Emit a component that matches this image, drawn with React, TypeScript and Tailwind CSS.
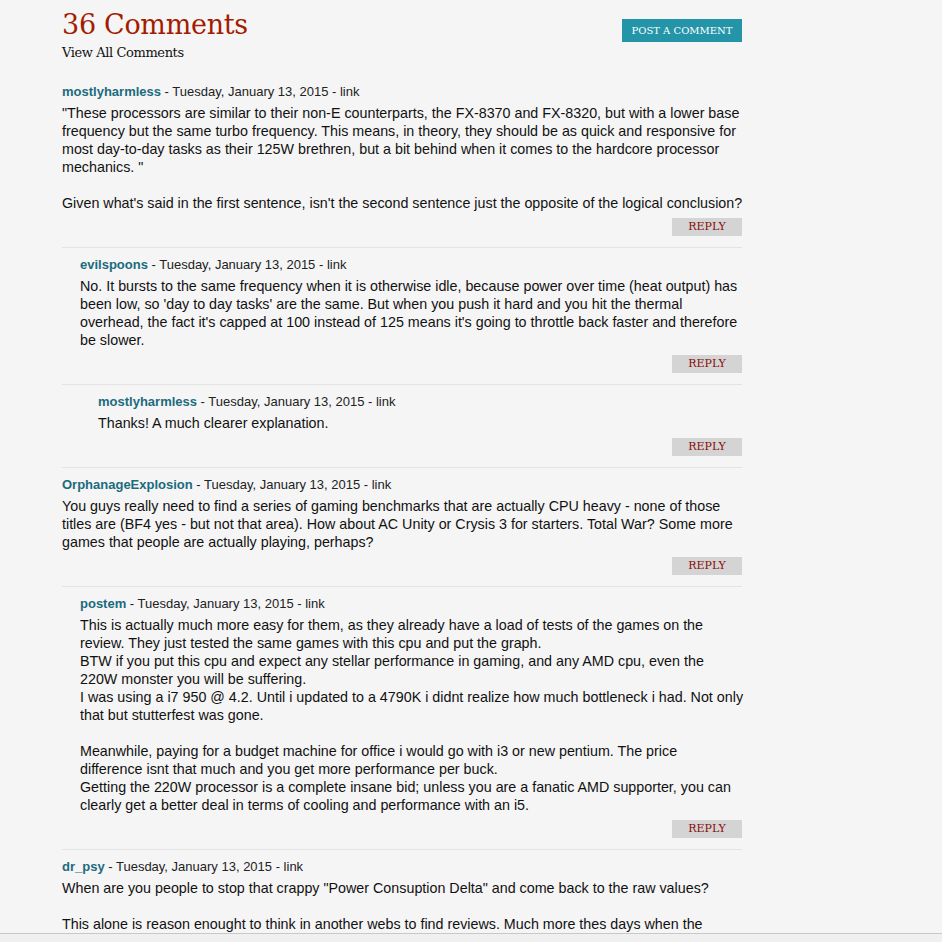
import React from "react";

type C = { user: string; depth: number; paras: string[] };

const comments: C[] = [
  {
    user: "mostlyharmless",
    depth: 0,
    paras: [
      "\"These processors are similar to their non-E counterparts, the FX-8370 and FX-8320, but with a lower base frequency but the same turbo frequency. This means, in theory, they should be as quick and responsive for most day-to-day tasks as their 125W brethren, but a bit behind when it comes to the hardcore processor mechanics. \"",
      "",
      "Given what's said in the first sentence, isn't the second sentence just the opposite of the logical conclusion?",
    ],
  },
  {
    user: "evilspoons",
    depth: 1,
    paras: [
      "No. It bursts to the same frequency when it is otherwise idle, because power over time (heat output) has been low, so 'day to day tasks' are the same. But when you push it hard and you hit the thermal overhead, the fact it's capped at 100 instead of 125 means it's going to throttle back faster and therefore be slower.",
    ],
  },
  {
    user: "mostlyharmless",
    depth: 2,
    paras: ["Thanks! A much clearer explanation."],
  },
  {
    user: "OrphanageExplosion",
    depth: 0,
    paras: [
      "You guys really need to find a series of gaming benchmarks that are actually CPU heavy - none of those titles are (BF4 yes - but not that area). How about AC Unity or Crysis 3 for starters. Total War? Some more games that people are actually playing, perhaps?",
    ],
  },
  {
    user: "postem",
    depth: 1,
    paras: [
      "This is actually much more easy for them, as they already have a load of tests of the games on the review. They just tested the same games with this cpu and put the graph.",
      "BTW if you put this cpu and expect any stellar performance in gaming, and any AMD cpu, even the 220W monster you will be suffering.",
      "I was using a i7 950 @ 4.2. Until i updated to a 4790K i didnt realize how much bottleneck i had. Not only that but stutterfest was gone.",
      "",
      "Meanwhile, paying for a budget machine for office i would go with i3 or new pentium. The price\ndifference isnt that much and you get more performance per buck.",
      "Getting the 220W processor is a complete insane bid; unless you are a fanatic AMD supporter, you can clearly get a better deal in terms of cooling and performance with an i5.",
    ],
  },
  {
    user: "dr_psy",
    depth: 0,
    paras: [
      "When are you people to stop that crappy \"Power Consuption Delta\" and come back to the raw values?",
      "",
      "This alone is reason enought to think in another webs to find reviews. Much more thes days when the",
    ],
  },
];

const pad = ["pl-0", "pl-[18px]", "pl-[36px]"];

function Comment({ c, last }: { c: C; last: boolean }) {
  return (
    <div>
      <div className={pad[c.depth]}>
        <div className="h-[18px] text-[13px] leading-[18px] text-[#222]">
          <span className="font-bold text-[#1b6b7e]">{c.user}</span>
          <span> - Tuesday, January 13, 2015 - link</span>
        </div>
        <div className="mt-[3px] mr-[-2px] whitespace-pre-line text-[14.3px] leading-[18px] text-[#111]">
          {c.paras.map((p, i) => (
            <div key={i} className="min-h-[18px]">
              {p}
            </div>
          ))}
        </div>
      </div>
      {!last && (
        <>
          <div className="mt-[6px] flex justify-end">
            <div
              className="flex h-[18px] w-[70px] items-center justify-center bg-[#d4d4d4] text-[11px] text-[#8a0a0a]"
              style={{ fontFamily: '"DejaVu Serif", serif' }}
            >
              REPLY
            </div>
          </div>
          <div className="mt-[11px] mb-[8px] h-px bg-[#e4e4e4]" />
        </>
      )}
    </div>
  );
}

export default function App() {
  return (
    <div
      className="min-h-screen bg-[#f5f5f5] pb-[10px]"
      style={{ fontFamily: '"Liberation Sans", Arial, sans-serif' }}
    >
      <div className="ml-[62px] w-[680px] pt-[8px]">
        <div className="flex items-start justify-between">
          <div style={{ fontFamily: '"DejaVu Serif", serif' }}>
            <h1 className="text-[27px] leading-[34px] tracking-[-0.3px] text-[#a31c02]">
              36 Comments
            </h1>
            <div className="mt-[2px] text-[13px] leading-[18px] tracking-[-0.4px] text-[#111]">
              View All Comments
            </div>
          </div>
          <div
            className="mt-[11px] flex h-[23px] w-[120px] items-center justify-center bg-[#2495a9] text-[10px] text-white"
            style={{ fontFamily: '"DejaVu Serif", serif' }}
          >
            POST A COMMENT
          </div>
        </div>
        <div className="mt-[21px]">
          {comments.map((c, i) => (
            <Comment key={i} c={c} last={i === comments.length - 1} />
          ))}
        </div>
      </div>
      <div className="fixed bottom-0 left-0 right-0 h-[9px] border-t border-[#c8c8c8] bg-[#f0f0f0]" />
    </div>
  );
}
